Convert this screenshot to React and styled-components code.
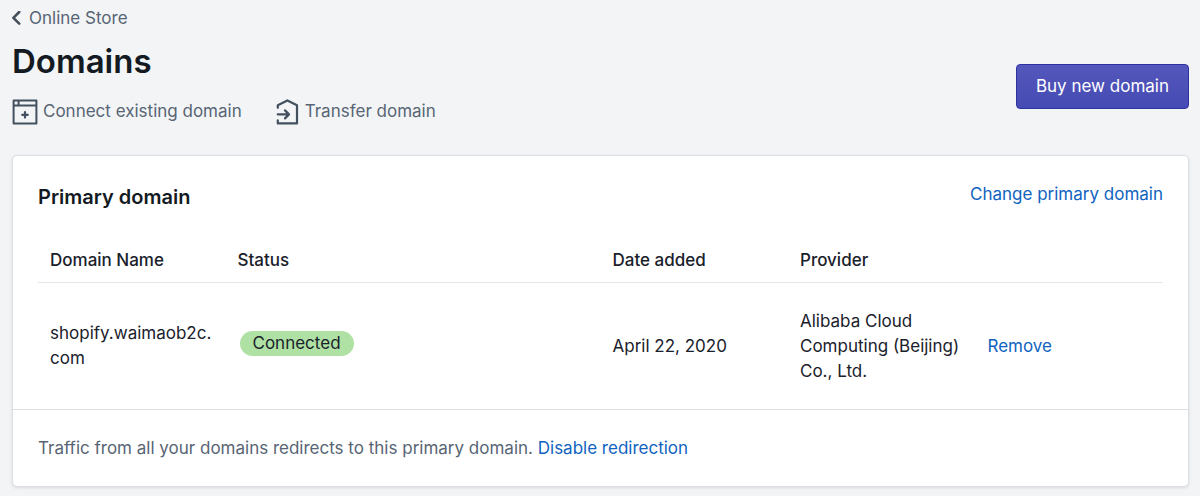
import styled, { createGlobalStyle } from "styled-components";

const domains = [
  {
    name: "shopify.waimaob2c.com",
    status: "Connected",
    dateAdded: "April 22, 2020",
    provider: "Alibaba Cloud Computing (Beijing) Co., Ltd.",
  },
];

const ChevronIcon = () => (
  <svg width="9" height="16" viewBox="1 0 9 16" aria-hidden="true">
    <path
      d="M8.2 1 2.4 6.8l5.8 5.8"
      fill="none"
      stroke="currentColor"
      strokeWidth="2.6"
      strokeLinecap="round"
      strokeLinejoin="round"
    />
  </svg>
);

const ConnectIcon = () => (
  <svg width="26" height="26" viewBox="0 0 26 26" aria-hidden="true">
    <g fill="none" stroke="currentColor" strokeWidth="2">
      <rect x="1.6" y="1.4" width="22.8" height="23" strokeLinejoin="round" />
      <path d="M1.6 6.6h22.8M6.6 2v5" />
      <path d="M13 13v5.6M10.2 15.8h5.6" strokeWidth="2.2" strokeLinecap="round" />
    </g>
  </svg>
);

const TransferIcon = () => (
  <svg width="26" height="26" viewBox="0 0 26 26" aria-hidden="true">
    <g
      fill="none"
      stroke="currentColor"
      strokeWidth="2.2"
      strokeLinecap="round"
      strokeLinejoin="round"
    >
      <path d="M3.8 8.8V6.2L13.4 1.4 23 6.2v18.2H3.8v-3" />
      <path d="M3.8 15.4h10.4M11 11.4l4 4-4 4" />
    </g>
  </svg>
);

const App = () => {
  return (
    <>
      <GlobalStyle />
      <Page>
        {/* Header */}
        <Breadcrumb href="#online-store">
          <ChevronIcon />
          Online Store
        </Breadcrumb>

        <Header>
          <div>
            <Title>Domains</Title>
            <Actions>
              <ActionButton type="button">
                <ConnectIcon />
                Connect existing domain
              </ActionButton>
              <ActionButton type="button">
                <TransferIcon />
                Transfer domain
              </ActionButton>
            </Actions>
          </div>
          <PrimaryButton type="button">Buy new domain</PrimaryButton>
        </Header>

        {/* Primary domain */}
        <Card>
          <CardSection>
            <CardHeader>
              <CardTitle>Primary domain</CardTitle>
              <Link href="#change">Change primary domain</Link>
            </CardHeader>

            <Table>
              <colgroup>
                <Column $span={1} />
                <Column $span={2} />
                <Column $span={1} />
                <Column $span={1} />
                <Column $span={1} />
              </colgroup>
              <thead>
                <tr>
                  <HeadCell scope="col">Domain Name</HeadCell>
                  <HeadCell scope="col">Status</HeadCell>
                  <HeadCell scope="col">Date added</HeadCell>
                  <HeadCell scope="col">Provider</HeadCell>
                  <HeadCell as="td" />
                </tr>
              </thead>
              <tbody>
                {domains.map((domain) => (
                  <tr key={domain.name}>
                    <Cell>{domain.name}</Cell>
                    <Cell>
                      <Badge>{domain.status}</Badge>
                    </Cell>
                    <Cell>{domain.dateAdded}</Cell>
                    <Cell>{domain.provider}</Cell>
                    <Cell>
                      <LinkButton type="button">Remove</LinkButton>
                    </Cell>
                  </tr>
                ))}
              </tbody>
            </Table>
          </CardSection>

          <CardFooter>
            Traffic from all your domains redirects to this primary domain.{" "}
            <Link href="#disable">Disable redirection</Link>
          </CardFooter>
        </Card>
      </Page>
    </>
  );
};

const GlobalStyle = createGlobalStyle`
  * {
    box-sizing: border-box;
  }

  body {
    margin: 0;
    background-color: #f3f4f6;
    color: #1a212b;
    font-family: Inter, "Liberation Sans", sans-serif;
    font-size: 17px;
    line-height: 25px;
  }

  button {
    font: inherit;
    cursor: pointer;
  }
`;

// Styled Components
const Page = styled.main`
  padding: 6px 11px 9px 12px;
`;

const Breadcrumb = styled.a`
  display: inline-flex;
  align-items: center;
  gap: 8px;
  color: #576574;
  text-decoration: none;

  svg {
    color: #454f5b;
  }
`;

const Header = styled.header`
  display: flex;
  justify-content: space-between;
  align-items: center;
  margin-bottom: 30px;
`;

const Title = styled.h1`
  margin: 7px 0 18px;
  color: #141a22;
  font-size: 33px;
  font-weight: 600;
  line-height: 40px;
`;

const Actions = styled.div`
  display: flex;
  gap: 32px;
`;

const ActionButton = styled.button`
  display: flex;
  align-items: center;
  gap: 5px;
  padding: 0;
  background: none;
  border: none;
  color: #576574;

  svg {
    color: #43505f;
  }
`;

const PrimaryButton = styled.button`
  margin-top: 14px;
  padding: 9px 19px;
  background: linear-gradient(to bottom, #5457bb, #454bb4);
  border: 1px solid #2e31a0;
  border-radius: 4px;
  color: white;
`;

const Card = styled.section`
  background-color: white;
  border: 1px solid #dcdfe4;
  border-radius: 5px;
  box-shadow: 0 1px 3px rgba(33, 43, 54, 0.12);
`;

const CardSection = styled.div`
  padding: 26px 25px 0;
`;

const CardHeader = styled.div`
  display: flex;
  justify-content: space-between;
  align-items: flex-start;
  margin-bottom: 25px;
`;

const CardTitle = styled.h2`
  margin: 0;
  color: #141a22;
  font-size: 20px;
  font-weight: 600;
  line-height: 30px;
`;

const Link = styled.a`
  color: #1063c0;
  text-decoration: none;

  &:hover {
    text-decoration: underline;
  }
`;

const LinkButton = styled.button`
  padding: 0;
  background: none;
  border: none;
  color: #1063c0;
`;

const Table = styled.table`
  width: 100%;
  table-layout: fixed;
  border-collapse: collapse;
`;

const Column = styled.col`
  width: calc(100% * ${(props) => props.$span} / 6);
`;

const HeadCell = styled.th`
  padding: 11px 12px 9px;
  border-bottom: 1px solid #e3e5e8;
  font-weight: 500;
  text-align: left;
`;

const Cell = styled.td`
  padding: 26px 12px 25px;
  overflow-wrap: anywhere;
`;

const Badge = styled.span`
  display: inline-block;
  margin: 0 0 5px 2px;
  padding: 0 13px;
  background-color: #aee1a3;
  border-radius: 13px;
`;

const CardFooter = styled.div`
  padding: 26px 25px 25px;
  border-top: 1px solid #dcdfe4;
  color: #576574;
`;

export default App;
